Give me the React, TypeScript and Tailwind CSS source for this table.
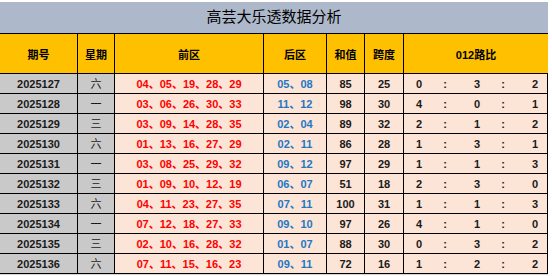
import React from "react";

type Row = {
  issue: string;
  week: string;
  front: string[];
  back: string[];
  sum: number;
  span: number;
  ratio: [number, number, number];
};

const rows: Row[] = [
  { issue: "2025127", week: "六", front: ["04", "05", "19", "28", "29"], back: ["05", "08"], sum: 85, span: 25, ratio: [0, 3, 2] },
  { issue: "2025128", week: "一", front: ["03", "06", "26", "30", "33"], back: ["11", "12"], sum: 98, span: 30, ratio: [4, 0, 1] },
  { issue: "2025129", week: "三", front: ["03", "09", "14", "28", "35"], back: ["02", "04"], sum: 89, span: 32, ratio: [2, 1, 2] },
  { issue: "2025130", week: "六", front: ["01", "13", "16", "27", "29"], back: ["02", "11"], sum: 86, span: 28, ratio: [1, 3, 1] },
  { issue: "2025131", week: "一", front: ["03", "08", "25", "29", "32"], back: ["09", "12"], sum: 97, span: 29, ratio: [1, 1, 3] },
  { issue: "2025132", week: "三", front: ["01", "09", "10", "12", "19"], back: ["06", "07"], sum: 51, span: 18, ratio: [2, 3, 0] },
  { issue: "2025133", week: "六", front: ["04", "11", "23", "27", "35"], back: ["07", "11"], sum: 100, span: 31, ratio: [1, 1, 3] },
  { issue: "2025134", week: "一", front: ["07", "12", "18", "27", "33"], back: ["09", "10"], sum: 97, span: 26, ratio: [4, 1, 0] },
  { issue: "2025135", week: "三", front: ["02", "10", "16", "28", "32"], back: ["01", "07"], sum: 88, span: 30, ratio: [0, 3, 2] },
  { issue: "2025136", week: "六", front: ["07", "11", "15", "16", "23"], back: ["09", "11"], sum: 72, span: 16, ratio: [1, 2, 2] },
];

const grid = "grid grid-cols-[78px_37px_149px_63px_38px_39px_144px]";
const font = { fontFamily: '"Liberation Sans", "Noto Sans CJK SC", sans-serif' };

const Ratio = ({ r }: { r: [number, number, number] }) => (
  <div className="flex items-center pl-[10px]">
    <span className="w-[10px] text-center">{r[0]}</span>
    <span className="ml-[16px] w-[10px] text-center">:</span>
    <span className="ml-[22px] w-[10px] text-center">{r[1]}</span>
    <span className="ml-[16px] w-[10px] text-center">:</span>
    <span className="ml-[22px] w-[10px] text-center">{r[2]}</span>
  </div>
);

export default function App() {
  const headers = ["期号", "星期", "前区", "后区", "和值", "跨度", "012路比"];
  return (
    <div className="w-[552px] h-[276px] bg-white overflow-hidden pt-[2px]" style={font}>
      <div className="w-[548px]">
        <div className="h-[31px] bg-[#adb9ca] flex items-center justify-center text-[15px] text-black">
          高芸大乐透数据分析
        </div>
        <div className={`${grid} h-[41px] bg-[#ffc000] border-y border-black text-[11px] font-bold text-black`}>
          {headers.map((h, i) => (
            <div
              key={h}
              className={`flex items-center justify-center pt-[3px] ${i < 6 ? "border-r border-black" : ""}`}
            >
              {h}
            </div>
          ))}
        </div>
        {rows.map((r) => (
          <div key={r.issue} className={`${grid} h-[20px] border-b border-black text-[11px] font-bold`}>
            <div className="bg-[#c9c9c9] border-r border-black flex items-center justify-center pt-[2px] text-[#1a1a1a]">
              {r.issue}
            </div>
            <div className="bg-[#c9c9c9] border-r border-black flex items-center justify-center pt-[2px] font-normal text-[#1a1a1a]">
              {r.week}
            </div>
            <div className="bg-[#fce4d6] border-r border-black flex items-center justify-center pt-[2px] text-[#ff0000]">
              {r.front.join("、")}
            </div>
            <div className="bg-[#fce4d6] border-r border-black flex items-center justify-center pt-[2px] text-[#1f78c4]">
              {r.back.join("、")}
            </div>
            <div className="bg-[#fce4d6] border-r border-black flex items-center justify-center pt-[2px] text-[#1a1a1a]">
              {r.sum}
            </div>
            <div className="bg-[#fce4d6] border-r border-black flex items-center justify-center pt-[2px] text-[#1a1a1a]">
              {r.span}
            </div>
            <div className="bg-[#fce4d6] border-r border-black flex items-center pt-[2px] text-[#1a1a1a]">
              <Ratio r={r.ratio} />
            </div>
          </div>
        ))}
        <div className="h-[1px] bg-[#d4d4d4]" />
      </div>
    </div>
  );
}
